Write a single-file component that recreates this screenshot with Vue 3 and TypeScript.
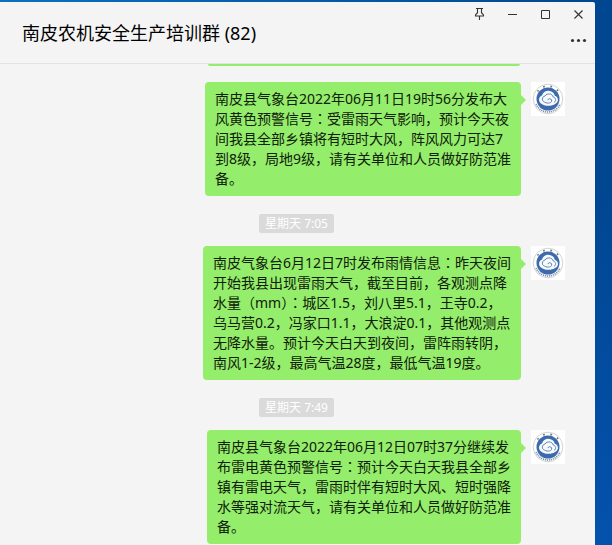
<script setup lang="ts">
interface Entry {
  id: number
  kind: 'time' | 'message'
  lines: string[]
}

interface Run {
  text: string
  centred: boolean
}

const title = '南皮农机安全生产培训群 (82)'

const entries: Entry[] = [
  {
    id: 1,
    kind: 'message',
    lines: [
      '南皮县气象台2022年06月11日19时56分发布大',
      '风黄色预警信号：受雷雨天气影响，预计今天夜',
      '间我县全部乡镇将有短时大风，阵风风力可达7',
      '到8级，局地9级，请有关单位和人员做好防范准',
      '备。',
    ],
  },
  { id: 2, kind: 'time', lines: ['星期天 7:05'] },
  {
    id: 3,
    kind: 'message',
    lines: [
      '南皮气象台6月12日7时发布雨情信息：昨天夜间',
      '开始我县出现雷雨天气，截至目前，各观测点降',
      '水量（mm）：城区1.5，刘八里5.1，王寺0.2，',
      '乌马营0.2，冯家口1.1，大浪淀0.1，其他观测点',
      '无降水量。预计今天白天到夜间，雷阵雨转阴，',
      '南风1-2级，最高气温28度，最低气温19度。',
    ],
  },
  { id: 4, kind: 'time', lines: ['星期天 7:49'] },
  {
    id: 5,
    kind: 'message',
    lines: [
      '南皮县气象台2022年06月12日07时37分继续发',
      '布雷电黄色预警信号：预计今天白天我县全部乡',
      '镇有雷电天气，雷雨时伴有短时大风、短时强降',
      '水等强对流天气，请有关单位和人员做好防范准',
      '备。',
    ],
  },
]

// Colons take a face that centres them in their square.
function toRuns(line: string): Run[] {
  return line
    .split(/(：)/)
    .filter((text) => text !== '')
    .map((text) => ({ text, centred: text === '：' }))
}
</script>

<template>
  <div class="desktop">
    <main class="window">
      <header class="header">
        <h1 class="title">{{ title }}</h1>
        <div class="actions">
          <div class="controls">
            <button type="button" class="control" aria-label="置顶">
              <svg width="11" height="14" viewBox="0 0 11 14" fill="none" stroke="#333" stroke-width="1.1">
                <path d="M2 1.5h7M3.5 1.5v4.2L1.5 8v1h8V8l-2-2.3V1.5M5.5 9v4" />
              </svg>
            </button>
            <button type="button" class="control" aria-label="最小化">
              <svg width="11" height="14" viewBox="0 0 11 14" stroke="#333">
                <path d="M1 7.5h9" />
              </svg>
            </button>
            <button type="button" class="control" aria-label="最大化">
              <svg width="11" height="14" viewBox="0 0 11 14" fill="none" stroke="#333">
                <path d="M1.5 3.5h8v8h-8z" />
              </svg>
            </button>
            <button type="button" class="control" aria-label="关闭">
              <svg width="11" height="14" viewBox="0 0 11 14" stroke="#333" stroke-width="1.1">
                <path d="M1.5 3.5l8 8M9.5 3.5l-8 8" />
              </svg>
            </button>
          </div>
          <button type="button" class="more" aria-label="聊天信息">
            <svg width="17" height="5" viewBox="0 0 17 5" fill="#333">
              <circle cx="2.5" cy="2.5" r="1.6" />
              <circle cx="8.5" cy="2.5" r="1.6" />
              <circle cx="14.5" cy="2.5" r="1.6" />
            </svg>
          </button>
        </div>
      </header>

      <section class="chat">
        <div class="earlier"></div>
        <template v-for="entry in entries" :key="entry.id">
          <time v-if="entry.kind === 'time'" class="stamp">{{ entry.lines[0] }}</time>
          <article v-else class="message">
            <p class="bubble">
              <span v-for="line in entry.lines" :key="line" class="line"><span v-for="(run, i) in toRuns(line)" :key="i" :class="{ centred: run.centred }">{{ run.text }}</span></span>
            </p>
            <svg class="avatar" width="34" height="34" viewBox="0 0 34 34" fill="none">
              <path d="M0 0h34v34H0z" fill="#fff" />
              <circle cx="17" cy="17" r="14.8" stroke="#c4c8cc" stroke-width="0.8" />
              <path d="M6.5 9.5A13 13 0 0 1 27.5 9.5" stroke="#6c7776" stroke-width="1.6" stroke-dasharray="1.8 5.4" />
              <path d="M5 22A13 13 0 0 0 29 22" stroke="#7c8ca0" stroke-width="1.5" stroke-dasharray="1.2 0.8" />
              <circle cx="17" cy="17" r="11.5" fill="#3c6aac" />
              <path
                d="M10 21.4c-3-2.2-2.4-6.6 1-7.8 1-4.2 5.6-6 9.2-4.2 2.2 1 3.2 2.4 3.6 4.4 3.8 1.2 4.4 6 .6 8-3.8 2.8-10.8 2.8-14.4-.4z"
                fill="#f7fafc"
              />
              <path
                d="M23 20.4c2.6-1.4 2-4.8-.8-5.4-.8-3.6-6.2-4.2-8.2-1-3.4.8-3.6 5-.4 6.2 3.2 1.8 7.8.8 7-2.2-.6-1.8-3.4-1.8-3.8.2"
                stroke="#6285b8"
                stroke-width="1"
              />
            </svg>
          </article>
        </template>
      </section>
    </main>
  </div>
</template>

<style>
body {
  margin: 0;
}
</style>

<style scoped>
.desktop {
  box-sizing: border-box;
  height: 100vh;
  padding: 2px 17px 0 0;
  background:
    linear-gradient(to bottom, transparent 2px, rgba(8, 92, 196, 0) 30%, rgba(8, 92, 196, 0.55)),
    linear-gradient(to right, #0b70bf, #00458f);
  font-family: "Noto Sans", "Noto Sans CJK SC", sans-serif;
}

.window {
  display: flex;
  flex-direction: column;
  height: 100%;
  overflow: hidden;
  border-top-right-radius: 2px;
  background: #f4f4f4;
}

.header {
  display: flex;
  flex: none;
  justify-content: space-between;
  height: 61px;
  border-bottom: 1px solid #e2e2e2;
}

.title {
  margin: 0;
  padding-left: 22px;
  color: #000;
  font-size: 18px;
  font-weight: 400;
  line-height: 62px;
  white-space: nowrap;
}

.actions {
  display: flex;
  flex-direction: column;
  align-items: flex-end;
  gap: 12px;
}

.controls {
  display: flex;
}

.control,
.more {
  display: flex;
  align-items: center;
  justify-content: center;
  padding: 0;
  border: 0;
  background: none;
}

.control {
  width: 33px;
  height: 24px;
}

.more {
  width: 33px;
  height: 5px;
}

.chat {
  display: flex;
  flex: 1;
  flex-direction: column;
  min-height: 0;
  overflow: hidden;
  padding-right: 30px;
}

.earlier {
  flex: none;
  align-self: flex-end;
  width: 312px;
  height: 2px;
  margin: 0 45px 16px 0;
  border-radius: 0 0 4px 4px;
  background: #94ed6b;
}

.message {
  display: flex;
  flex: none;
  align-items: flex-start;
  justify-content: flex-end;
  gap: 10px;
}

.bubble {
  position: relative;
  margin: 0;
  padding: 7px 10px;
  border-radius: 4px;
  background: #94ed6b;
  color: #10200a;
  font-size: 14px;
  line-height: 20px;
}

.bubble::after {
  content: "";
  position: absolute;
  top: 13px;
  right: -5px;
  border-top: 5px solid transparent;
  border-bottom: 5px solid transparent;
  border-left: 5px solid #94ed6b;
}

.line {
  display: block;
  white-space: nowrap;
}

.centred {
  font-family: "Noto Sans", "Noto Sans CJK TC", sans-serif;
}

.avatar {
  flex: none;
}

.stamp {
  flex: none;
  align-self: center;
  margin: 18px 0 13px 28px;
  padding: 0 6px;
  border-radius: 2px;
  background: #dadada;
  color: #fff;
  font-size: 12px;
  line-height: 19px;
}
</style>
